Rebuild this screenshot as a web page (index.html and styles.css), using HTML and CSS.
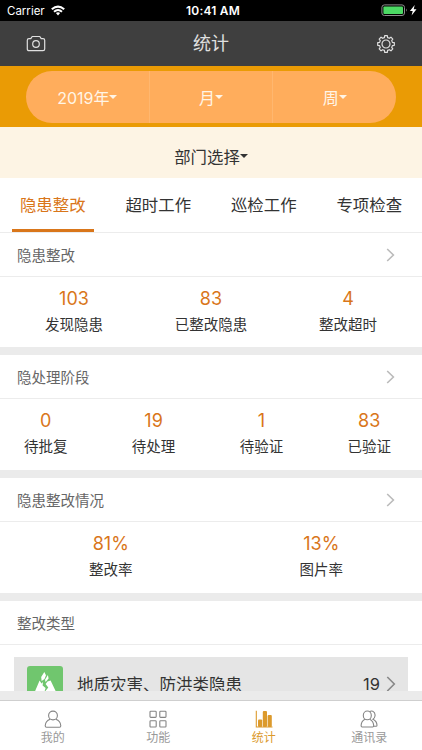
FILE: index.html
```
<!DOCTYPE html>
<html lang="zh-CN">
<head>
  <meta charset="UTF-8" />
  <meta name="viewport" content="width=device-width, initial-scale=1.0" />
  <title>统计</title>
  <link rel="stylesheet" href="styles.css">
</head>
<body>

  <div class="status-bar">
    <div class="carrier">
      <span>Carrier</span>
      <svg class="wifi" width="14" height="11" viewBox="0 0 14 11">
        <path d="M.8 4.3 Q7 -1.2 13.2 4.3" fill="none" stroke="#fff" stroke-width="2.1" />
        <path d="M3 6.8 Q7 3.2 11 6.8" fill="none" stroke="#fff" stroke-width="1.9" />
        <path d="M4.9 8.1 Q7 6.5 9.1 8.1 L7 10.4 Z" fill="#fff" />
      </svg>
    </div>
    <span class="time">10:41 AM</span>
    <svg class="battery" width="38" height="13" viewBox="0 0 38 13">
      <rect x=".9" y=".9" width="22.6" height="10.6" rx="2.5" fill="none" stroke="#8b8b8b" />
      <rect x="2.4" y="2.4" width="19.6" height="7.6" rx="1" fill="#4cd964" />
      <path d="M25 4.6 Q26.7 6.2 25 7.8 Z" fill="#8b8b8b" />
      <path d="M33.7 .9 L28.9 6.9 H31.7 L30.6 11.4 L35.5 5.3 H32.7 Z" fill="#fff" />
    </svg>
  </div>

  <header class="navbar">
    <svg class="nav-icon" width="20" height="18" viewBox="0 0 20 18">
      <path d="M3 3.6 H4.8 L6.2 1.5 H13.8 L15.2 3.6 H17 Q18.7 3.6 18.7 5.3 V14 Q18.7 15.7 17 15.7 H3 Q1.3 15.7 1.3 14 V5.3 Q1.3 3.6 3 3.6 Z" />
      <circle cx="10" cy="9" r="3.3" />
    </svg>
    <h1>统计</h1>
    <svg class="nav-icon" width="20" height="20" viewBox="-10 -10 20 20">
      <path d="M-1.6 -6.4 L-1.3 -8.3 H1.3 L1.6 -6.4 L3.4 -5.7 L4.95 -6.8 L6.8 -4.95 L5.7 -3.4 L6.4 -1.6 L8.3 -1.3 V1.3 L6.4 1.6 L5.7 3.4 L6.8 4.95 L4.95 6.8 L3.4 5.7 L1.6 6.4 L1.3 8.3 H-1.3 L-1.6 6.4 L-3.4 5.7 L-4.95 6.8 L-6.8 4.95 L-5.7 3.4 L-6.4 1.6 L-8.3 1.3 V-1.3 L-6.4 -1.6 L-5.7 -3.4 L-6.8 -4.95 L-4.95 -6.8 L-3.4 -5.7 Z" />
      <circle r="4" />
    </svg>
  </header>

  <div class="date-bar">
    <div class="date-picker">
      <div class="date-item">2019年<i class="caret"></i></div>
      <div class="date-item">月<i class="caret"></i></div>
      <div class="date-item">周<i class="caret"></i></div>
    </div>
  </div>

  <div class="department">部门选择<i class="caret"></i></div>

  <nav class="tabs">
    <div class="tab active"><span>隐患整改</span></div>
    <div class="tab"><span>超时工作</span></div>
    <div class="tab"><span>巡检工作</span></div>
    <div class="tab"><span>专项检查</span></div>
  </nav>

  <main class="content">
    <section class="panel">
      <div class="panel-title">
        <h2>隐患整改</h2>
        <svg class="arrow" width="9" height="14" viewBox="0 0 9 14"><path d="M1.2 1 L7.4 7 L1.2 13" /></svg>
      </div>
      <div class="stats three">
        <div class="stat"><b>103</b><span>发现隐患</span></div>
        <div class="stat"><b>83</b><span>已整改隐患</span></div>
        <div class="stat"><b>4</b><span>整改超时</span></div>
      </div>
    </section>

    <section class="panel">
      <div class="panel-title">
        <h2>隐处理阶段</h2>
        <svg class="arrow" width="9" height="14" viewBox="0 0 9 14"><path d="M1.2 1 L7.4 7 L1.2 13" /></svg>
      </div>
      <div class="stats four">
        <div class="stat"><b>0</b><span>待批复</span></div>
        <div class="stat"><b>19</b><span>待处理</span></div>
        <div class="stat"><b>1</b><span>待验证</span></div>
        <div class="stat"><b>83</b><span>已验证</span></div>
      </div>
    </section>

    <section class="panel">
      <div class="panel-title">
        <h2>隐患整改情况</h2>
        <svg class="arrow" width="9" height="14" viewBox="0 0 9 14"><path d="M1.2 1 L7.4 7 L1.2 13" /></svg>
      </div>
      <div class="stats two">
        <div class="stat"><b>81%</b><span>整改率</span></div>
        <div class="stat"><b>13%</b><span>图片率</span></div>
      </div>
    </section>

    <section class="panel">
      <div class="panel-title"><h2>整改类型</h2></div>
      <div class="type-item">
        <svg class="type-icon" width="36" height="36" viewBox="0 0 36 36">
          <rect width="36" height="36" rx="3" fill="#70c66e" />
          <path d="M6 30 L12.6 14.5 L14.5 17.5 L16 16 L15.6 19.5 L18.6 22 L17.2 26.5 L21.3 21.5 L18.6 18 L20.5 15.5 L23.6 14.5 L31 30 Z" fill="#fff" />
          <path d="M17.3 6 L19 9.3 L17.5 13 L14.6 15 L14.2 11 Z M20.9 9 L21.6 12.5 L18.6 16 L18 13.8 Z" fill="#fff" />
        </svg>
        <span class="type-name">地质灾害、防洪类隐患</span>
        <span class="type-count">19</span>
        <svg class="arrow dark" width="10" height="16" viewBox="0 0 10 16"><path d="M1.3 1 L8.3 8 L1.3 15" /></svg>
      </div>
    </section>
  </main>

  <footer class="tabbar">
    <div class="tabbar-item">
      <svg width="18" height="18" viewBox="0 0 18 18">
        <circle cx="9" cy="5.5" r="4.4" />
        <path d="M6.2 9.2 Q1.4 10.8 1.2 15.8 Q1.2 17.2 2.5 17.2 H15.5 Q16.8 17.2 16.8 15.8 Q16.6 10.8 11.8 9.2" />
      </svg>
      <span>我的</span>
    </div>
    <div class="tabbar-item">
      <svg width="18" height="18" viewBox="0 0 18 18">
        <rect x="1" y="1.2" width="6.2" height="6.2" rx=".8" />
        <rect x="10.8" y="1.2" width="6.2" height="6.2" rx=".8" />
        <rect x="1" y="10.8" width="6.2" height="6.2" rx=".8" />
        <rect x="10.8" y="10.8" width="6.2" height="6.2" rx=".8" />
      </svg>
      <span>功能</span>
    </div>
    <div class="tabbar-item active">
      <svg width="18" height="18" viewBox="0 0 18 18">
        <path d="M1.3 .8 V17 H17.5" />
        <rect class="bar" x="3" y="9.5" width="4.2" height="7.5" rx="1" />
        <rect class="bar" x="7.8" y="1" width="4.2" height="16" rx="1" />
        <rect class="bar" x="12.6" y="5" width="4.2" height="12" rx="1" />
      </svg>
      <span>统计</span>
    </div>
    <div class="tabbar-item">
      <svg width="18" height="18" viewBox="0 0 18 18">
        <ellipse cx="7.3" cy="5.4" rx="4" ry="4.4" />
        <path d="M5 9.2 Q1.2 11 1.1 15.8 Q1.1 17 2.2 17 H12.6 Q13.7 17 13.7 15.8 Q13.5 11 9.7 9.2" />
        <path d="M9.5 1.7 Q11 .6 12.8 1.2 Q15.5 2.4 15 6 Q14.6 8.2 13 9.2 Q16.8 11 17 15.2 Q17 16.3 16 16.3 H13.8" />
      </svg>
      <span>通讯录</span>
    </div>
  </footer>

</body>
</html>
```
FILE: styles.css
```
* {
  box-sizing: border-box;
}

body {
  display: flex;
  flex-direction: column;
  height: 750px;
  margin: 0;
  overflow: hidden;
  background: #fff;
  color: #333;
  font-family: Inter, "Noto Sans CJK SC", sans-serif;
  font-weight: 400;
}

h1,
h2 {
  margin: 0;
  font-weight: 400;
}

svg {
  display: block;
  flex: none;
}

.status-bar {
  display: grid;
  grid-template-columns: 1fr auto 1fr;
  align-items: center;
  flex: none;
  height: 21px;
  padding: 0 3px 0 7px;
  background: #000;
  color: #fff;
  font-size: 11.5px;
}

.carrier {
  display: flex;
  align-items: center;
  gap: 6px;
}

.time {
  font-size: 12px;
  font-weight: 600;
  letter-spacing: .2px;
}

.battery {
  justify-self: end;
}

.navbar {
  display: flex;
  align-items: center;
  justify-content: space-between;
  flex: none;
  height: 45px;
  padding: 0 26px;
  background: #3f3f3f;
  color: #e0e0e0;
}

.navbar h1 {
  font-size: 18px;
  line-height: 44px;
}

.nav-icon {
  fill: none;
  stroke: #e0e0e0;
  stroke-width: 1.2;
  stroke-linejoin: round;
}

.date-bar {
  flex: none;
  height: 61px;
  padding: 5px 26px 4px;
  background: #ea9b05;
}

.date-picker {
  display: flex;
  height: 52px;
  border-radius: 26px;
  background: #ffad5c;
  overflow: hidden;
}

.date-item {
  display: flex;
  flex: 1;
  align-items: center;
  justify-content: center;
  padding-bottom: 1px;
  color: #fff5e6;
  font-size: 16px;
}

.date-item + .date-item {
  border-left: 1px solid #ffb76f;
}

.caret {
  border: 4px solid transparent;
  border-top-color: currentColor;
  border-bottom: 0;
}

.department {
  display: flex;
  align-items: center;
  justify-content: center;
  flex: none;
  height: 51px;
  padding-top: 7px;
  background: #fdf4e4;
  font-size: 16.4px;
}

.tabs {
  display: flex;
  flex: none;
  height: 55px;
  border-bottom: 1px solid #ececec;
  font-size: 16.4px;
}

.tab {
  display: flex;
  flex: 1;
  justify-content: center;
  line-height: 54px;
}

.tab span {
  width: 82px;
  height: 54px;
  text-align: center;
}

.tab.active span {
  border-bottom: 3px solid #d9761a;
  color: #d9761a;
}

.content {
  display: flex;
  flex-direction: column;
  flex: none;
  gap: 8px;
  height: 467px;
  overflow: hidden;
  background: #ebebeb;
  border-bottom: 9px solid #ebebeb;
}

.panel {
  flex: none;
  height: 115px;
  background: #fff;
}

.panel:first-child {
  height: 114px;
}

.panel-title {
  display: flex;
  align-items: center;
  justify-content: space-between;
  height: 44px;
  padding: 0 27px 0 17px;
  border-bottom: 1px solid #ececec;
}

.panel-title h2 {
  color: #666;
  font-size: 14.5px;
}

.arrow {
  fill: none;
  stroke: #bbb;
  stroke-width: 1.6;
}

.stats {
  display: flex;
  justify-content: space-between;
  height: 70px;
  padding-top: 9px;
}

.three {
  padding-right: 45px;
  padding-left: 45px;
}

.four {
  padding-right: 31px;
  padding-left: 24px;
}

.two {
  padding-right: 79px;
  padding-left: 89px;
}

.stat {
  display: flex;
  flex-direction: column;
  align-items: center;
}

.stat b {
  color: #d9761a;
  font-size: 18px;
  font-weight: 400;
  line-height: 26px;
}

.stat span {
  font-size: 14.5px;
  line-height: 26px;
}

.type-item {
  display: flex;
  align-items: center;
  height: 54px;
  margin: 12px 14px 0;
  padding: 0 12px 0 13px;
  background: #e5e5e5;
  font-size: 16.5px;
}

.type-name {
  flex: 1;
  margin-left: 14px;
}

.type-count {
  margin-right: 6px;
}

.arrow.dark {
  stroke: #888;
}

.tabbar {
  display: flex;
  flex: none;
  height: 50px;
  border-top: 1px solid #cfcfcf;
  background: #fff;
  color: #999;
  font-size: 12px;
}

.tabbar-item {
  display: flex;
  flex: 1;
  flex-direction: column;
  align-items: center;
  padding-top: 9px;
  line-height: 19px;
}

.tabbar-item svg {
  fill: none;
  stroke: #858585;
  stroke-width: 1.1;
}

.tabbar-item.active {
  color: #dc9a2c;
}

.tabbar-item.active svg {
  stroke: #dc9a2c;
}

.tabbar .bar {
  fill: #dc9a2c;
  stroke: none;
}
```
